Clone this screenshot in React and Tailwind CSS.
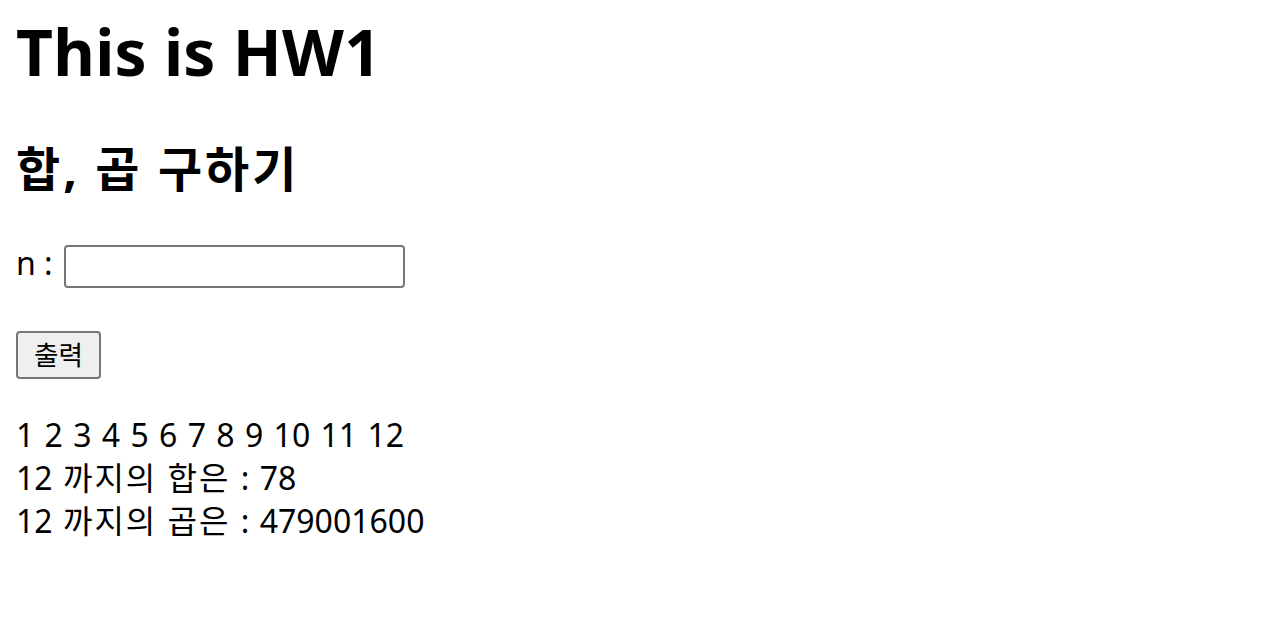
import React from "react";

export default function App() {
  const font = { fontFamily: '"Noto Sans", "Noto Sans CJK KR", sans-serif' };
  return (
    <div className="min-h-screen bg-white pl-4 pt-[20px] text-black" style={font}>
      <h1 className="h-[64px] text-[64px] leading-[64px] font-bold whitespace-nowrap tracking-[0.3px]">This is HW1</h1>
      <h2 className="mt-[61px] text-[48px] leading-[48px] font-bold whitespace-nowrap tracking-[3px]">합, 곱 구하기</h2>
      <div className="mt-[48px] flex items-start">
        <span className="text-[32px] leading-[43px] whitespace-pre">n : </span>
        <input
          type="text"
          className="mt-[4px] ml-[3px] h-[43px] w-[341px] rounded-[4px] border-2 border-[#767676] bg-white outline-none"
        />
      </div>
      <button
        className="mt-[43px] block h-[48px] w-[85px] rounded-[4px] border-2 border-[#767676] bg-[#efefef] text-[26.67px] leading-[40px]"
        style={font}
      >
        출력
      </button>
      <div className="mt-[34px] text-[32px] leading-[43px] [word-spacing:2px]">
        <div className="whitespace-pre">1 2 3 4 5 6 7 8 9 10 11 12</div>
        <div className="whitespace-pre">
          12 <span className="tracking-[2px]">까지의</span> <span className="tracking-[2px]">합은</span> : 78
        </div>
        <div className="whitespace-pre">
          12 <span className="tracking-[2px]">까지의</span> <span className="tracking-[2px]">곱은</span> : 479001600
        </div>
      </div>
    </div>
  );
}
